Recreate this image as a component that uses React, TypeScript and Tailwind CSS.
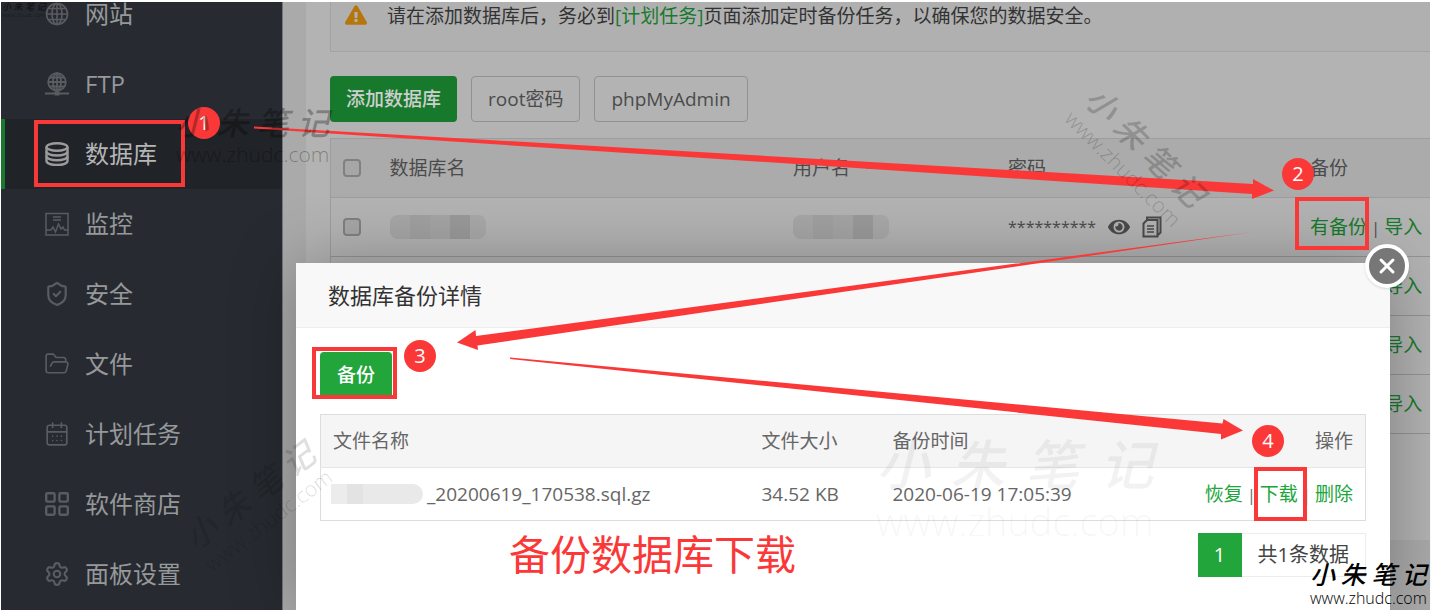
import type { ReactNode } from "react";
import { CalendarDays, FolderOpen, LayoutGrid, Settings, ShieldCheck, X } from "lucide-react";
import { FaExclamationTriangle, FaEye } from "react-icons/fa";

function GlobeIcon() {
  return (
    <svg viewBox="0 0 24 24" className="size-6" fill="none" stroke="currentColor" strokeWidth="1.6">
      <circle cx="12" cy="12" r="10.5" />
      <ellipse cx="12" cy="12" rx="5" ry="10.5" />
      <path d="M12 1.5v21M1.5 12h21M3.5 6.5h17M3.5 17.5h17" />
    </svg>
  );
}

function FtpIcon() {
  return (
    <svg viewBox="0 0 24 24" className="size-6" fill="none" stroke="currentColor" strokeWidth="1.8">
      <circle cx="12" cy="10" r="8.8" />
      <ellipse cx="12" cy="10" rx="4" ry="8.8" />
      <path d="M12 1.2v17.6M3.2 10h17.6M4.8 5.5h14.4M4.8 14.5h14.4" />
      <path d="M0 21.5h24" strokeWidth="2" />
      <path d="M9.5 21.5h5" strokeWidth="4" />
    </svg>
  );
}

function DatabaseIcon() {
  return (
    <svg viewBox="0 0 24 24" className="size-6" fill="none" stroke="currentColor" strokeWidth="2.4">
      <ellipse cx="12" cy="5" rx="10.5" ry="3.8" />
      <path d="M1.5 5v14c0 2.2 4.5 4 10.5 4s10.5-1.8 10.5-4V5" />
      <path d="M1.5 9.5c0 2.2 4.5 4 10.5 4s10.5-1.8 10.5-4M1.5 14.3c0 2.2 4.5 4 10.5 4s10.5-1.8 10.5-4" />
    </svg>
  );
}

function MonitorIcon() {
  return (
    <svg viewBox="0 0 24 24" className="size-6" fill="none" stroke="currentColor" strokeWidth="1.5">
      <path d="M1 1.5h22v21.5H1zM8 5h8M8 8h8" />
      <path d="M1 18h5l2-3 2.5 5 3-8 2.5 5 2-2 1.5 3H23" />
    </svg>
  );
}

function CopyIcon() {
  return (
    <svg viewBox="0 0 20 22" className="h-[22px] w-5" fill="none" stroke="currentColor" strokeWidth="2">
      <path d="M5 3.5V1.5h13.5v15L16 19" />
      <path d="M5 4h10.5v16.5H1.5V7.5z" />
      <path d="M5 10h7M5 13h7M5 16h7" strokeWidth="1.5" />
    </svg>
  );
}

type NavItem = { label: string; icon: ReactNode; active?: boolean };

const navItems: NavItem[] = [
  { label: "网站", icon: <GlobeIcon /> },
  { label: "FTP", icon: <FtpIcon /> },
  { label: "数据库", icon: <DatabaseIcon />, active: true },
  { label: "监控", icon: <MonitorIcon /> },
  { label: "安全", icon: <ShieldCheck className="size-6" viewBox="2 1 20 22" /> },
  { label: "文件", icon: <FolderOpen className="size-6" viewBox="1 1 22 22" strokeWidth={1.5} /> },
  { label: "计划任务", icon: <CalendarDays className="size-6" viewBox="2 1 20 22" strokeWidth={1.5} /> },
  { label: "软件商店", icon: <LayoutGrid className="size-6" viewBox="2 2 20 20" strokeWidth={2} /> },
  { label: "面板设置", icon: <Settings className="size-6" viewBox="1 1 22 22" strokeWidth={2} /> },
];

function Sidebar() {
  return (
    <nav className="w-[282px] shrink-0 overflow-hidden border-r border-[#73767a] bg-[#272b31]">
      <ul className="-mt-[23px]">
        {navItems.map((item) => (
          <li key={item.label}>
            <a
              href="#"
              className={`flex h-[70px] items-center gap-4 border-l-4 pl-10 text-2xl ${
                item.active
                  ? "border-[#18792b] bg-[#202327] text-[#b5b5b5]"
                  : "border-transparent text-[#96989a]"
              }`}
            >
              <span className={item.active ? "text-[#9b9b9b]" : "text-[#595c60]"}>{item.icon}</span>
              {item.label}
            </a>
          </li>
        ))}
      </ul>
    </nav>
  );
}

function CheckBox({ label }: { label: string }) {
  return (
    <input
      type="checkbox"
      aria-label={label}
      className="block size-[18px] appearance-none rounded border-2 border-[#808080] bg-[#a6a6a6]"
    />
  );
}

function MaskedName() {
  return (
    <span className="flex h-6 w-[96px] overflow-hidden rounded-lg">
      <span className="w-5 bg-[#a6a6a6]" />
      <span className="w-5 bg-[#a0a0a0]" />
      <span className="w-5 bg-[#a4a4a4]" />
      <span className="w-5 bg-[#999999]" />
      <span className="w-4 bg-[#a8a8a8]" />
    </span>
  );
}

function Divider() {
  return <span className="text-base">{" | "}</span>;
}

const databases = [1, 2, 3, 4];

function DatabaseTable() {
  return (
    <table className="mt-4 w-full table-fixed border-collapse border-t border-l border-[#9d9d9d] text-left text-[19px] text-[#4b4b4b]">
      <thead>
        <tr className="h-[59px] border-b border-[#9d9d9d] bg-[#ababab]">
          <th className="w-[45px] pl-3">
            <CheckBox label="全选" />
          </th>
          <th className="pl-[14px] font-normal">数据库名</th>
          <th className="w-[215px] pl-[14px] font-normal">
            <span className="flex items-center gap-4">
              用户名
              <span className="h-0.5 w-4 bg-[#858585]" />
            </span>
          </th>
          <th className="w-[302px] pl-[14px] font-normal">密码</th>
          <th className="w-[134px] pl-[14px] font-normal">备份</th>
        </tr>
      </thead>
      <tbody>
        {databases.map((id) => (
          <tr key={id} className="h-[59px] border-b border-[#949494]">
            <td className="pl-3">
              <CheckBox label={`选择数据库 ${id}`} />
            </td>
            <td className="pl-[14px]">
              <MaskedName />
            </td>
            <td className="pl-[14px]">
              <MaskedName />
            </td>
            <td className="pl-[14px]">
              <span className="flex items-center gap-3">
                <span className="text-base">**********</span>
                <button type="button" aria-label="显示密码">
                  <FaEye className="size-[22px]" />
                </button>
                <button type="button" aria-label="复制密码">
                  <CopyIcon />
                </button>
              </span>
            </td>
            <td className="pl-[14px] whitespace-nowrap">
              <a href="#" className="text-[#177a2c]">
                有备份
              </a>
              <Divider />
              <a href="#" className="text-[#177a2c]">
                导入
              </a>
            </td>
          </tr>
        ))}
      </tbody>
    </table>
  );
}

function DatabasePage() {
  return (
    <main className="min-w-0 flex-1 bg-[#aaaaaa] pl-[23px]">
      <div className="min-h-[538px] bg-[#b3b3b3] pl-6">
        <p className="flex h-[50px] items-start border-b border-l border-[#a3a3a3] bg-[#b0b0b0] pl-3.5 text-[19px] leading-7 whitespace-nowrap text-[#333333]">
          <FaExclamationTriangle className="mt-0.5 mr-5 size-[22px] text-[#b6760c]" />
          <span>
            请在添加数据库后，务必到
            <a href="#" className="text-[#177a2c]">
              [计划任务]
            </a>
            页面添加定时备份任务，以确保您的数据安全。
          </span>
        </p>
        <div className="mt-6 flex gap-3.5 text-[19px] text-[#4b4b4b]">
          <button type="button" className="h-[46px] rounded bg-[#17792b] px-4 font-medium text-[#cfcfcf]">
            添加数据库
          </button>
          <button type="button" className="h-[46px] rounded border border-[#919191] px-4">
            root密码
          </button>
          <button type="button" className="h-[46px] rounded border border-[#919191] px-4">
            phpMyAdmin
          </button>
        </div>
        <DatabaseTable />
      </div>
    </main>
  );
}

function BackupDialog() {
  return (
    <section
      role="dialog"
      aria-labelledby="backup-title"
      className="absolute top-[263px] right-[41px] bottom-0 left-[296px] rounded-t-sm bg-white shadow-[1px_1px_68px_rgba(0,0,0,0.3)]"
    >
      <header className="flex h-[65px] items-center border-b border-[#eeeeee] bg-[#f8f8f8] px-8">
        <h2 id="backup-title" className="text-[22px] text-[#333333]">
          数据库备份详情
        </h2>
      </header>
      <button
        type="button"
        aria-label="关闭"
        className="absolute -top-[19px] -right-[19px] grid size-11 place-items-center rounded-full border-4 border-white bg-[#777777] text-white shadow"
      >
        <X className="size-6" strokeWidth={3} />
      </button>
      <div className="px-6 pt-6">
        <button type="button" className="h-[46px] rounded bg-[#22a53b] px-[17px] text-[19px] font-medium text-white">
          备份
        </button>
        <table className="mt-4 w-full table-fixed border-collapse border border-[#dddddd] text-left text-[19px] whitespace-nowrap text-[#666666]">
          <thead>
            <tr className="h-[53px] border-b border-[#e6e6e6] bg-[#f5f5f5]">
              <th className="pl-3 font-normal">文件名称</th>
              <th className="w-[131px] pl-3 font-normal">文件大小</th>
              <th className="w-[280px] pl-3 font-normal">备份时间</th>
              <th className="w-[205px] pr-3 text-right font-normal">操作</th>
            </tr>
          </thead>
          <tbody>
            <tr className="h-[53px]">
              <td className="pl-2.5">
                <span className="flex items-center">
                  <span className="flex h-5 w-[92px] overflow-hidden rounded-r-full rounded-l-md">
                    <span className="w-4 bg-[#ececec]" />
                    <span className="w-4 bg-[#e3e3e3]" />
                    <span className="flex-1 bg-[#e9e9e9]" />
                  </span>
                  <span className="pl-1">_20200619_170538.sql.gz</span>
                </span>
              </td>
              <td className="pl-3">34.52 KB</td>
              <td className="pl-3">2020-06-19 17:05:39</td>
              <td className="pr-3 text-right">
                <a href="#" className="text-[#20a53a]">
                  恢复
                </a>
                <Divider />
                <a href="#" className="text-[#20a53a]">
                  下载
                </a>
                <Divider />
                <a href="#" className="text-[#20a53a]">
                  删除
                </a>
              </td>
            </tr>
          </tbody>
        </table>
        <div className="mt-3 flex justify-end text-xl">
          <span className="grid h-11 w-11 place-items-center bg-[#22a53b] text-white">1</span>
          <span className="grid h-11 place-items-center border border-l-0 border-[#ececec] px-4 text-[#444444]">
            共1条数据
          </span>
        </div>
      </div>
    </section>
  );
}

function Step({ n, className }: { n: number; className: string }) {
  return (
    <span
      className={`absolute grid size-8 place-items-center rounded-full bg-[#fb3838] text-xl leading-none text-white ${className}`}
    >
      {n}
    </span>
  );
}

function Frame({ className }: { className: string }) {
  return <div className={`absolute border-4 border-[#fb3838] ${className}`} />;
}

function Annotations() {
  return (
    <div className="pointer-events-none absolute inset-0">
      <Frame className="top-[120px] left-[34px] h-[67px] w-[151px]" />
      <Frame className="top-[197px] left-[1295px] h-[53px] w-[74px]" />
      <Frame className="top-[347px] left-[312px] h-[52px] w-[85px]" />
      <Frame className="top-[467px] left-[1254px] h-[54px] w-[53px]" />
      <svg className="absolute inset-0 size-full" fill="#fb3838">
        <path d="M254 126.5L1253 184V179L1274 190.5L1252 199V194L254 128.5z" />
        <path d="M1252 232L476 336L475.5 330L457 342.5L478 350L477.5 345.5z" />
        <path d="M510 357.5L1222.5 423.5L1223.5 419L1243 430.5L1221 439.5V434L510 359z" />
      </svg>
      <Step n={1} className="top-[107px] left-[188px]" />
      <Step n={2} className="top-[158px] left-[1282px]" />
      <Step n={3} className="top-[340px] left-[404px]" />
      <Step n={4} className="top-[425px] left-[1252px]" />
      <p className="absolute top-[530px] left-[509px] text-[41px] leading-[48px] text-[#fb3838]">
        备份数据库下载
      </p>
    </div>
  );
}

type WatermarkProps = { className: string; name: string; url: string };

function Watermark({ className, name, url }: WatermarkProps) {
  return (
    <div
      className={`pointer-events-none absolute flex flex-col whitespace-nowrap ${className}`}
    >
      <span className={`flex justify-between font-medium italic ${name}`}>
        {["小", "朱", "笔", "记"].map((char) => (
          <span key={char}>{char}</span>
        ))}
      </span>
      <span className={`font-light ${url}`}>www.zhudc.com</span>
    </div>
  );
}

export default function App() {
  return (
    <div className="relative flex h-screen overflow-hidden bg-white px-px pt-0.5 font-['Open_Sans','Noto_Sans_CJK_SC',sans-serif]">
      <Sidebar />
      <DatabasePage />
      <BackupDialog />
      <Annotations />
      <Watermark
        className="top-0.5 left-0.5 text-black/60"
        name="text-[9px] leading-[10px]"
        url="text-[6px] leading-[6px]"
      />
      <Watermark
        className="top-[104px] left-[176px] text-black/30"
        name="text-[32px] leading-[38px]"
        url="text-[21px] leading-6"
      />
      <Watermark
        className="top-[124px] left-[1060px] rotate-45 text-black/20"
        name="text-[32px] leading-[38px]"
        url="text-[21px] leading-6"
      />
      <Watermark
        className="top-[474px] left-[180px] -rotate-37 text-black/15"
        name="text-[32px] leading-[38px]"
        url="text-[21px] leading-6"
      />
      <Watermark
        className="top-[432px] left-[876px] text-black/5"
        name="text-[54px] leading-[64px]"
        url="text-[38px] leading-[50px]"
      />
      <Watermark
        className="top-[560px] left-[1310px] text-black"
        name="text-[25px] leading-[28px]"
        url="text-[16px] leading-[20px]"
      />
    </div>
  );
}
